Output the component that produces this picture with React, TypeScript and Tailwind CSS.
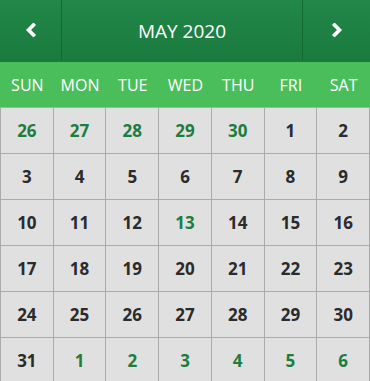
const DAYS = ["SUN", "MON", "TUE", "WED", "THU", "FRI", "SAT"];

type Cell = { n: number; other: boolean; today?: boolean };

function buildCells(): Cell[] {
    const cells: Cell[] = [];
    [26, 27, 28, 29, 30].forEach((n) => cells.push({ n, other: true }));
    for (let n = 1; n <= 31; n++) cells.push({ n, other: false, today: n === 13 });
    for (let n = 1; n <= 6; n++) cells.push({ n, other: true });
    return cells;
}

function Chevron({ dir }: { dir: "left" | "right" }) {
    return (
        <svg width="12" height="14" viewBox="0 0 12 14">
            <polyline
                points={dir === "left" ? "8.5,2 3.5,7 8.5,12" : "3.5,2 8.5,7 3.5,12"}
                fill="none"
                stroke="white"
                strokeWidth="3.6"
                strokeLinecap="square"
                strokeLinejoin="miter"
            />
        </svg>
    );
}

export default function App() {
    const cells = buildCells();

    return (
        <div className="w-[370px] h-[381px] overflow-hidden bg-white font-['Open_Sans','Liberation_Sans',sans-serif]">
            {/* header */}
            <div className="flex h-[62px] bg-gradient-to-b from-[#22874a] to-[#1a7a3d] text-white">
                <button className="w-[62px] flex items-center justify-center border-r border-[#136a30] mb-[2px]">
                    <Chevron dir="left" />
                </button>
                <div className="flex-1 flex items-center justify-center text-[19px]">MAY 2020</div>
                <button className="w-[68px] flex items-center justify-center border-l border-[#136a30] mb-[2px]">
                    <Chevron dir="right" />
                </button>
            </div>

            {/* weekdays */}
            <div className="grid grid-cols-7 h-[45px] bg-[#4bbe5c] text-white text-[16px] pl-px">
                {DAYS.map((d) => (
                    <div key={d} className="flex items-center justify-center">{d}</div>
                ))}
            </div>

            {/* days */}
            <div className="grid grid-cols-7 border-l border-t border-[#ababab] bg-[#e0e0e0]">
                {cells.map((c, i) => (
                    <div
                        key={i}
                        className={`h-[46px] flex items-center justify-center border-r border-b border-[#ababab] text-[17px] font-bold ${
                            c.other || c.today ? "text-[#1d7d3f]" : "text-[#2b2b2b]"
                        }`}
                    >
                        {c.n}
                    </div>
                ))}
            </div>
        </div>
    );
}
